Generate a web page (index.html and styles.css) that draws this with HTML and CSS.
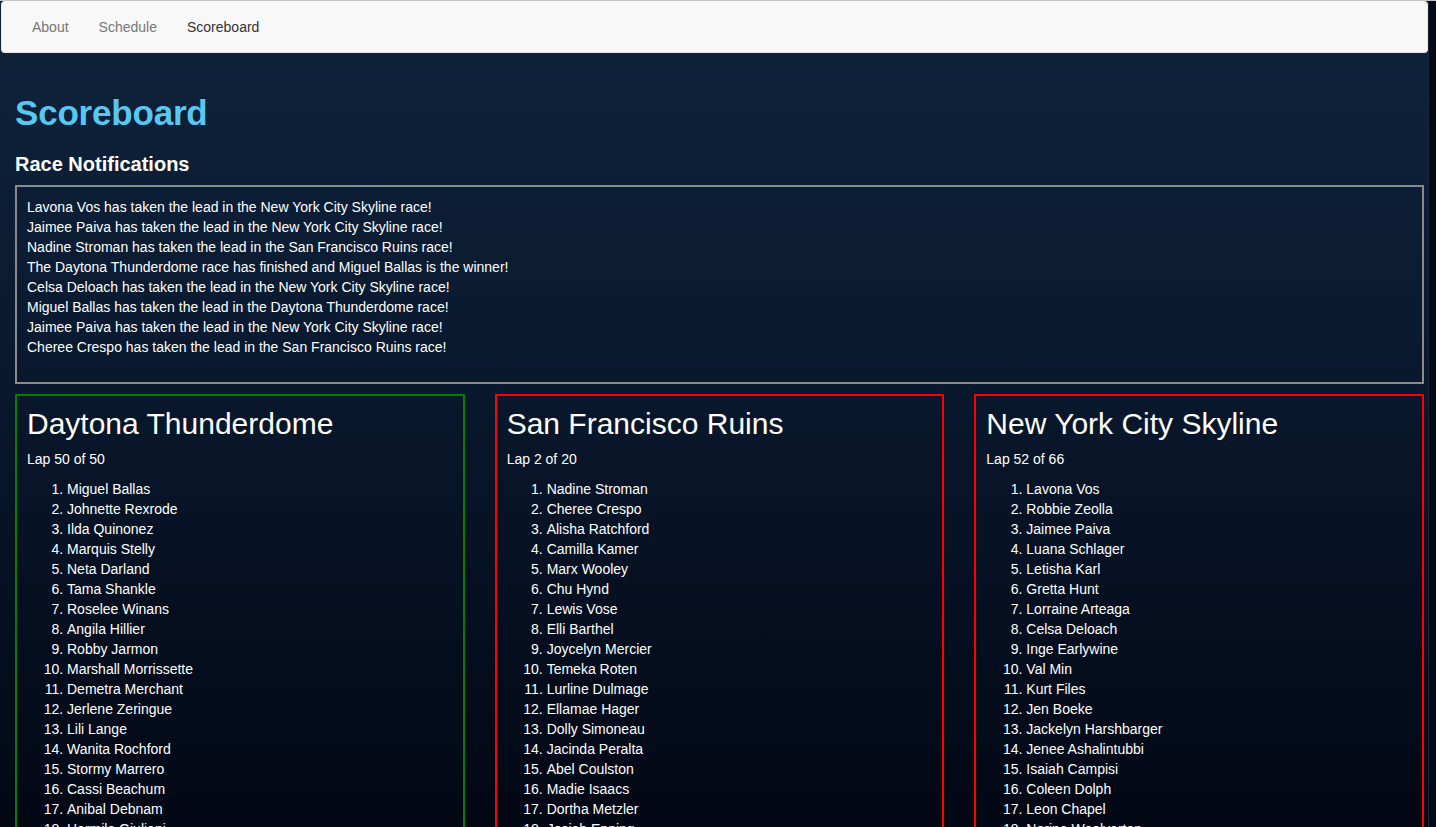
FILE: index.html
```html
<!DOCTYPE html>
<html lang="en">
<head>
<meta charset="utf-8">
<title>Scoreboard</title>
<link rel="stylesheet" href="styles.css">
</head>
<body>
<div class="window">
  <div class="page">
    <nav class="navbar">
      <ul class="nav">
        <li><a href="#">About</a></li>
        <li><a href="#">Schedule</a></li>
        <li class="active"><a href="#">Scoreboard</a></li>
      </ul>
    </nav>
    <main class="content">
      <h1 class="title">Scoreboard</h1>
      <h3 class="subtitle">Race Notifications</h3>
      <div class="notifications">
        <div>Lavona Vos has taken the lead in the New York City Skyline race!</div>
        <div>Jaimee Paiva has taken the lead in the New York City Skyline race!</div>
        <div>Nadine Stroman has taken the lead in the San Francisco Ruins race!</div>
        <div>The Daytona Thunderdome race has finished and Miguel Ballas is the winner!</div>
        <div>Celsa Deloach has taken the lead in the New York City Skyline race!</div>
        <div>Miguel Ballas has taken the lead in the Daytona Thunderdome race!</div>
        <div>Jaimee Paiva has taken the lead in the New York City Skyline race!</div>
        <div>Cheree Crespo has taken the lead in the San Francisco Ruins race!</div>
      </div>
      <div class="races">
        <section class="race race-finished">
          <h2 class="race-name">Daytona Thunderdome</h2>
          <p class="lap">Lap 50 of 50</p>
          <ol class="standings">
            <li>Miguel Ballas</li><li>Johnette Rexrode</li><li>Ilda Quinonez</li><li>Marquis Stelly</li><li>Neta Darland</li><li>Tama Shankle</li><li>Roselee Winans</li><li>Angila Hillier</li><li>Robby Jarmon</li><li>Marshall Morrissette</li><li>Demetra Merchant</li><li>Jerlene Zeringue</li><li>Lili Lange</li><li>Wanita Rochford</li><li>Stormy Marrero</li><li>Cassi Beachum</li><li>Anibal Debnam</li><li>Hermila Giuliani</li>
          </ol>
        </section>
        <section class="race race-running">
          <h2 class="race-name">San Francisco Ruins</h2>
          <p class="lap">Lap 2 of 20</p>
          <ol class="standings">
            <li>Nadine Stroman</li><li>Cheree Crespo</li><li>Alisha Ratchford</li><li>Camilla Kamer</li><li>Marx Wooley</li><li>Chu Hynd</li><li>Lewis Vose</li><li>Elli Barthel</li><li>Joycelyn Mercier</li><li>Temeka Roten</li><li>Lurline Dulmage</li><li>Ellamae Hager</li><li>Dolly Simoneau</li><li>Jacinda Peralta</li><li>Abel Coulston</li><li>Madie Isaacs</li><li>Dortha Metzler</li><li>Josiah Epping</li>
          </ol>
        </section>
        <section class="race race-running">
          <h2 class="race-name">New York City Skyline</h2>
          <p class="lap">Lap 52 of 66</p>
          <ol class="standings">
            <li>Lavona Vos</li><li>Robbie Zeolla</li><li>Jaimee Paiva</li><li>Luana Schlager</li><li>Letisha Karl</li><li>Gretta Hunt</li><li>Lorraine Arteaga</li><li>Celsa Deloach</li><li>Inge Earlywine</li><li>Val Min</li><li>Kurt Files</li><li>Jen Boeke</li><li>Jackelyn Harshbarger</li><li>Jenee Ashalintubbi</li><li>Isaiah Campisi</li><li>Coleen Dolph</li><li>Leon Chapel</li><li>Norine Woolverton</li>
          </ol>
        </section>
      </div>
    </main>
  </div>
  <div class="scrollbar"></div>
</div>
</body>
</html>
```

FILE: styles.css
```css
html, body {
  margin: 0;
  padding: 0;
  height: 100%;
  overflow: hidden;
}

body {
  font-family: "Liberation Sans", Arial, Helvetica, sans-serif;
  font-size: 14px;
  line-height: 20px;
  color: #ffffff;
  background: #03091a;
}

.window {
  display: flex;
  height: 827px;
  border-top: 1px solid #c4c4c4;
  box-sizing: border-box;
}

.page {
  flex: 1;
  min-width: 0;
  background: linear-gradient(to bottom, #0f243d 0%, #0a1a30 40%, #020714 100%);
  overflow: hidden;
}

.scrollbar {
  width: 7px;
  background: #050b16;
  border-left: 1px solid #1c2736;
}

.navbar {
  margin: 0 0 0 1px;
  height: 50px;
  background: #f8f8f8;
  border: 1px solid #e7e7e7;
  border-top-color: #f8f8f8;
  border-radius: 4px;
  padding: 0 15px;
}

.nav {
  list-style: none;
  margin: 0;
  padding: 0;
  display: flex;
}

.nav a {
  display: block;
  padding: 15px;
  line-height: 20px;
  color: #777777;
  text-decoration: none;
}

.nav .active a {
  color: #333333;
}

.content {
  padding: 40px 4px 0 15px;
}

.title {
  margin: 0 0 10px;
  font-size: 35px;
  line-height: 39.6px;
  font-weight: 700;
  letter-spacing: -0.2px;
  color: #58c8f0;
}

.subtitle {
  margin: 20px 0 10px;
  font-size: 20px;
  line-height: 22px;
  font-weight: 700;
  color: #ffffff;
}

.notifications {
  border: 2px solid #8a8a8a;
  padding: 10px 10px 25px;
  margin-bottom: 10px;
}

.races {
  display: grid;
  grid-template-columns: repeat(3, 1fr);
  gap: 30px;
}

.race {
  padding: 11px 10px 10px;
  border: 2px solid #ff0000;
}

.race-finished {
  border-color: #008000;
}

.race-name {
  margin: 0 0 9px;
  font-size: 30px;
  line-height: 33px;
  font-weight: 400;
}

.lap {
  margin: 0 0 10px;
}

.standings {
  margin: 0;
  padding-left: 40px;
}
```
